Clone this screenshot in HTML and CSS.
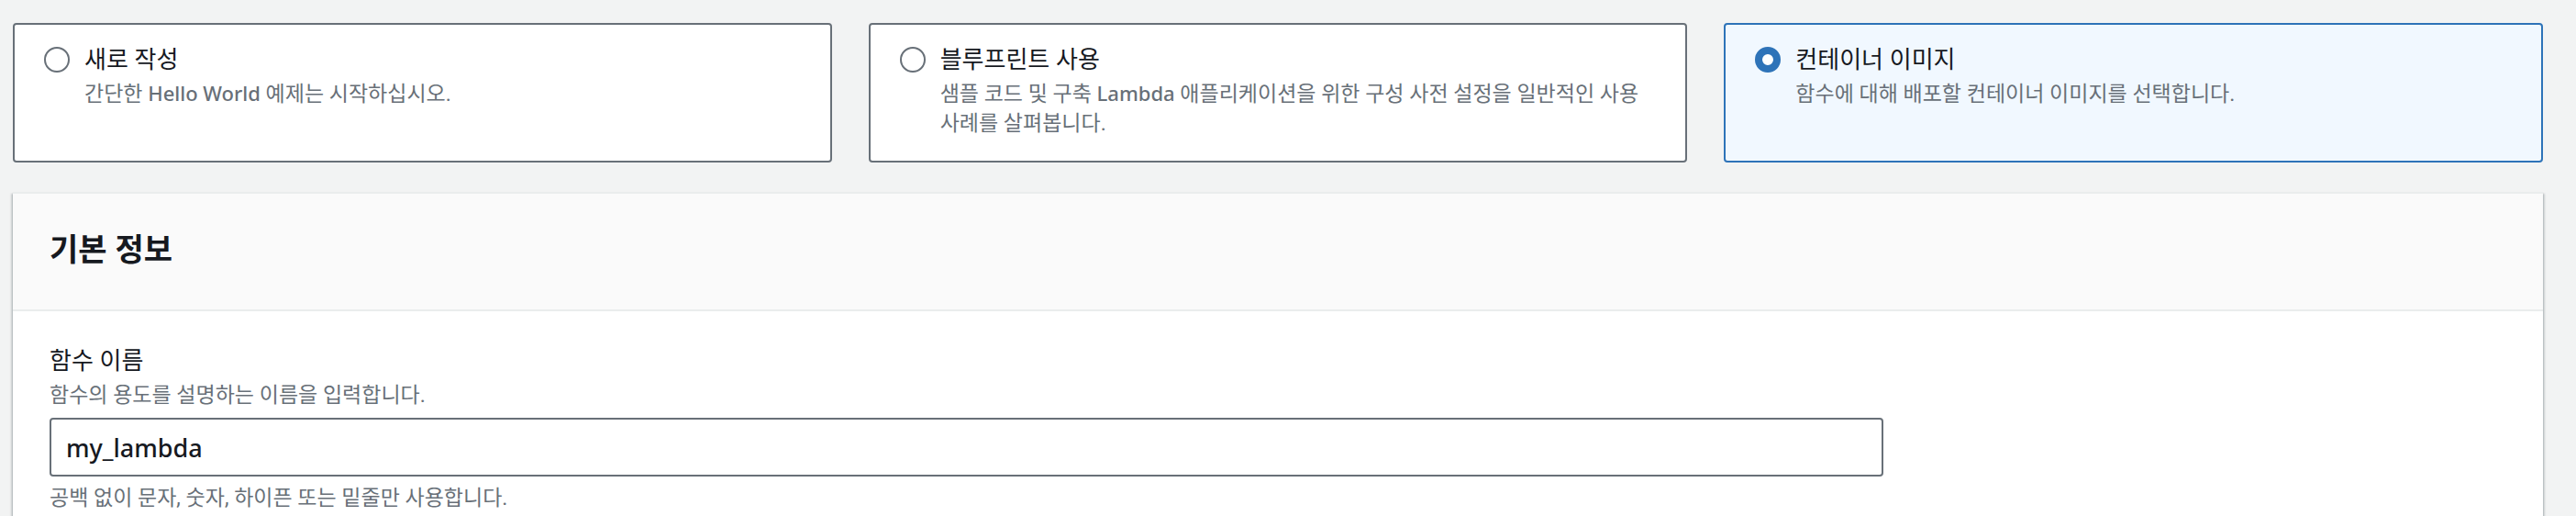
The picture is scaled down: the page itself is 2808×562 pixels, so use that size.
FILE: index.html
```html
<!DOCTYPE html>
<html lang="ko">
<head>
<meta charset="utf-8">
<title>함수 생성</title>
<link rel="stylesheet" href="styles.css">
</head>
<body>
<form class="page">
  <div class="tiles" role="radiogroup" aria-label="함수 생성 방법">
    <label class="tile">
      <input class="tile-radio" type="radio" name="method">
      <span class="tile-text">
        <span class="tile-title">새로 작성</span>
        <span class="note">간단한 <span class="latin">Hello World</span> 예제는 시작하십시오.</span>
      </span>
    </label>
    <label class="tile">
      <input class="tile-radio" type="radio" name="method">
      <span class="tile-text">
        <span class="tile-title">블루프린트 사용</span>
        <span class="note">샘플 코드 및 구축 <span class="latin">Lambda</span> 애플리케이션을 위한 구성 사전 설정을 일반적인 사용 사례를 살펴봅니다.</span>
      </span>
    </label>
    <label class="tile">
      <input class="tile-radio" type="radio" name="method" checked>
      <span class="tile-text">
        <span class="tile-title">컨테이너 이미지</span>
        <span class="note">함수에 대해 배포할 컨테이너 이미지를 선택합니다.</span>
      </span>
    </label>
  </div>

  <section class="panel">
    <header class="panel-header">
      <h2 class="panel-title">기본 정보</h2>
    </header>
    <div class="panel-body">
      <div class="field">
        <label class="field-label" for="function-name">함수 이름</label>
        <span class="note" id="name-description">함수의 용도를 설명하는 이름을 입력합니다.</span>
        <input class="field-input" id="function-name" type="text" value="my_lambda" spellcheck="false" aria-describedby="name-description name-hint">
        <span class="note" id="name-hint">공백 없이 문자, 숫자, 하이픈 또는 밑줄만 사용합니다.</span>
      </div>
    </div>
  </section>
</form>
</body>
</html>
```
FILE: styles.css
```css
* {
  box-sizing: border-box;
}

html {
  overflow: hidden;
}

body {
  margin: 0;
  background: #f2f3f3;
  color: #16191f;
  font-family: "Noto Sans", "Noto Sans CJK KR", sans-serif;
  word-break: keep-all;
}

.page {
  display: flex;
  flex-direction: column;
  gap: 32px;
  padding: 25px 36px 0 14px;
}

.tiles {
  display: grid;
  grid-template-columns: repeat(3, 1fr);
  gap: 40px;
}

.tile {
  display: flex;
  align-items: flex-start;
  gap: 16px;
  padding: 16px 32px 24px;
  border: 2px solid #687078;
  border-radius: 4px;
  background: #fff;
}

.tile:has(:checked) {
  border-color: #2e73b8;
  background: #f1f8ff;
}

.tile-radio {
  appearance: none;
  flex: none;
  width: 28px;
  height: 28px;
  margin: 8px 0;
  border: 2px solid #687078;
  border-radius: 50%;
  background: #fff;
}

.tile-radio:checked {
  border: 8px solid #2e73b8;
}

.tile-text {
  display: flex;
  flex-direction: column;
}

.tile-title,
.field-label {
  margin-bottom: 2px;
  font-size: 26px;
  line-height: 42px;
}

.note {
  color: #687078;
  font-family: Roboto, "Noto Sans CJK KR", sans-serif;
  font-size: 23px;
  line-height: 32px;
}

.latin {
  font-family: "Noto Sans", sans-serif;
  font-size: 22px;
  font-weight: 500;
  line-height: 1;
}

.panel {
  border-top: 2px solid #eaeded;
  background: #fff;
  box-shadow: 0 2px 2px rgba(0, 28, 36, 0.3), 2px 2px 2px rgba(0, 28, 36, 0.15), -2px 2px 2px rgba(0, 28, 36, 0.15);
}

.panel-header {
  padding: 36px 40px 42px;
  border-bottom: 2px solid #eaeded;
  background: #fafafa;
}

.panel-title {
  margin: 0;
  font-size: 34px;
  line-height: 48px;
}

.panel-body {
  display: grid;
  grid-template-columns: repeat(4, 1fr);
  gap: 40px;
  padding: 32px 40px;
}

.field {
  grid-column: span 3;
  display: flex;
  flex-direction: column;
}

.field-input {
  height: 64px;
  margin: 8px 0;
  padding: 0 16px;
  border: 2px solid #687078;
  border-radius: 4px;
  background: #fff;
  color: inherit;
  font: 500 27px "Noto Sans", "Noto Sans CJK KR", sans-serif;
}
```
